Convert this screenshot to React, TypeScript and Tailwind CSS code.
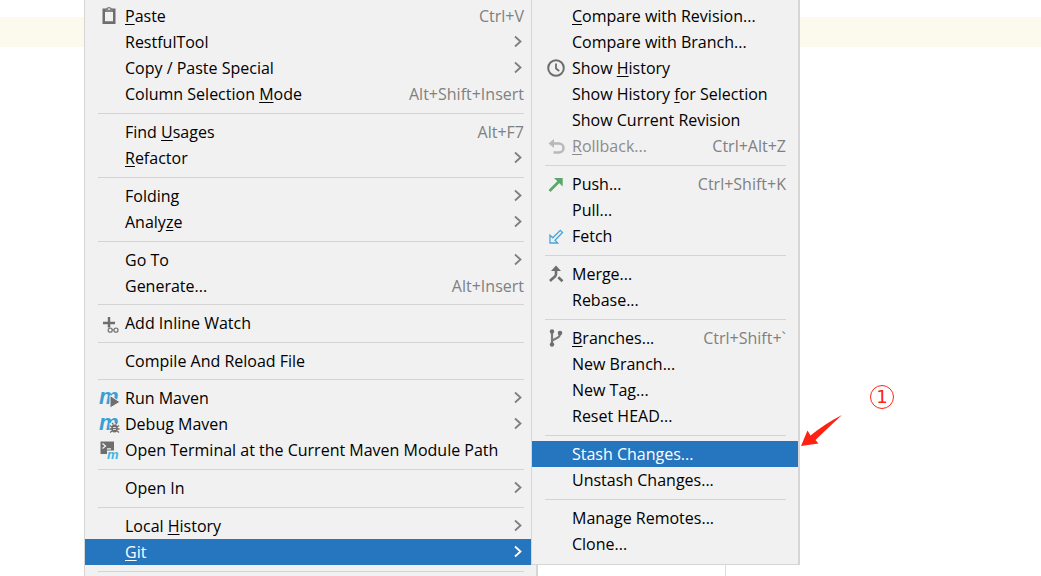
import type { ReactNode } from "react";

type Item = {
  label: string;
  mnemonic?: number;
  shortcut?: string;
  submenu?: boolean;
  icon?: ReactNode;
  disabled?: boolean;
  active?: boolean;
};

type Group = { items: Item[]; tight?: boolean };

function Icon({ children }: { children: ReactNode }) {
  return (
    <svg viewBox="0 0 20 20" className="size-5 overflow-visible" fill="none" aria-hidden="true">
      {children}
    </svg>
  );
}

const pasteIcon = (
  <Icon>
    <path d="M3.5 2.5h13v15.500h-13z M6 6v9.200h8V6z" fill="#6e6e6e" fillRule="evenodd" />
    <path d="M6.500 2.800C7.500 2.800 7.700 1 10 1s2.500 1.800 3.500 1.800V6h-7z" fill="#858585" />
    <path d="M9 2.500h2v1.200H9z" fill="#f1f1f1" />
  </Icon>
);

const watchIcon = (
  <Icon>
    <path d="M4 10h12M10 4v11" stroke="#6e6e6e" strokeWidth="2.400" />
    <path d="M8 14h12v6H8z" fill="#f1f1f1" />
    <path d="M10 13v1.500" stroke="#6e6e6e" strokeWidth="2.400" />
    <circle cx="11.200" cy="17.200" r="2" stroke="#7a7a7a" strokeWidth="1.300" />
    <circle cx="17" cy="17.200" r="2" stroke="#7a7a7a" strokeWidth="1.300" />
    <path d="M13 16.800h2" stroke="#7a7a7a" />
  </Icon>
);

const mavenText = "font-['Liberation_Sans',sans-serif] font-bold italic";

const runMavenIcon = (
  <Icon>
    <text x="0" y="15.500" className={mavenText} fontSize="22" fill="#389fd6">m</text>
    <path d="M11 7.500l10 6.500-10 6z" fill="#6e6e6e" stroke="#f1f1f1" />
  </Icon>
);

const debugMavenIcon = (
  <Icon>
    <text x="0" y="15.500" className={mavenText} fontSize="22" fill="#389fd6">m</text>
    <path d="M10.500 9H20v11h-9.500z" fill="#f1f1f1" />
    <ellipse cx="15.500" cy="14.500" rx="3.200" ry="4" fill="#6e6e6e" />
    <path d="M11 11.500l2 1.500M20 11.500L18 13M10.500 15h10M11 18.500l2-1.500M20 18.500L18 17M13 9l1.500 1.500M18 9l-1.500 1.500" stroke="#6e6e6e" strokeWidth="1.300" />
    <path d="M14 13.500h3M14 15.500h3" stroke="#f1f1f1" strokeWidth=".8" />
  </Icon>
);

const terminalIcon = (
  <Icon>
    <path d="M1.500 1.500H15v9H8V14H1.500z" fill="#6e6e6e" />
    <path d="M3.500 3.500l3 2.500-3 2.500M8 8.800h4" stroke="#f1f1f1" strokeWidth="1.300" />
    <text x="8" y="19" className={mavenText} fontSize="13" fill="#40b6e0">m</text>
  </Icon>
);

const historyIcon = (
  <Icon>
    <circle cx="10" cy="10" r="7.800" stroke="#6e6e6e" strokeWidth="2" />
    <path d="M10 5.500v5l3.200 2.500" stroke="#6e6e6e" strokeWidth="1.800" />
  </Icon>
);

const rollbackIcon = (
  <Icon>
    <path d="M2.500 7.500L8 3v9z" fill="#b8b8b8" />
    <path d="M7 7.500h6a4.500 4.500 0 0 1 0 9H7.500" stroke="#b8b8b8" strokeWidth="2.500" />
  </Icon>
);

const pushIcon = (
  <Icon>
    <path d="M8 4h8.700v8.500z" fill="#59a869" />
    <path d="M3.500 17L13.500 7" stroke="#59a869" strokeWidth="2.600" />
  </Icon>
);

const fetchIcon = (
  <Icon>
    <path d="M4 17V9.300l2.800 2.500 7.500-7.500 2.200 2.200L9 14.200l2.700 2.800z" stroke="#45a5db" strokeWidth="1.300" />
  </Icon>
);

const mergeIcon = (
  <Icon>
    <path d="M10 1.500l5 5.500H5z" fill="#6e6e6e" />
    <path d="M10 6v4.500c0 2-2.500 3-6 6.500M12.300 13.200l4.200 4" stroke="#6e6e6e" strokeWidth="2.600" />
  </Icon>
);

const branchIcon = (
  <Icon>
    <path d="M6 3v14M14 5c0 5-3 4.500-8 7.500" stroke="#7a7a7a" strokeWidth="2.200" />
    <circle cx="6" cy="3.500" r="2.200" fill="#6e6e6e" />
    <circle cx="6" cy="16.500" r="2.200" fill="#6e6e6e" />
    <circle cx="14" cy="5" r="2.300" fill="#6e6e6e" />
  </Icon>
);

const editorMenu: Group[] = [
  {
    items: [
      { label: "Paste", mnemonic: 0, shortcut: "Ctrl+V", icon: pasteIcon },
      { label: "RestfulTool", submenu: true },
      { label: "Copy / Paste Special", submenu: true },
      { label: "Column Selection Mode", mnemonic: 17, shortcut: "Alt+Shift+Insert" },
    ],
  },
  {
    items: [
      { label: "Find Usages", mnemonic: 5, shortcut: "Alt+F7" },
      { label: "Refactor", mnemonic: 0, submenu: true },
    ],
  },
  {
    items: [
      { label: "Folding", submenu: true },
      { label: "Analyze", mnemonic: 5, submenu: true },
    ],
  },
  {
    items: [
      { label: "Go To", submenu: true },
      { label: "Generate...", shortcut: "Alt+Insert" },
    ],
    tight: true,
  },
  { items: [{ label: "Add Inline Watch", icon: watchIcon }] },
  { items: [{ label: "Compile And Reload File" }], tight: true },
  {
    items: [
      { label: "Run Maven", submenu: true, icon: runMavenIcon },
      { label: "Debug Maven", submenu: true, icon: debugMavenIcon },
      { label: "Open Terminal at the Current Maven Module Path", icon: terminalIcon },
    ],
  },
  { items: [{ label: "Open In", submenu: true }] },
  {
    items: [
      { label: "Local History", mnemonic: 6, submenu: true },
      { label: "Git", mnemonic: 0, submenu: true, active: true },
    ],
  },
  { items: [] },
];

const gitMenu: Group[] = [
  {
    items: [
      { label: "Compare with Revision...", mnemonic: 0 },
      { label: "Compare with Branch..." },
      { label: "Show History", mnemonic: 5, icon: historyIcon },
      { label: "Show History for Selection", mnemonic: 13 },
      { label: "Show Current Revision" },
      { label: "Rollback...", mnemonic: 0, shortcut: "Ctrl+Alt+Z", icon: rollbackIcon, disabled: true },
    ],
  },
  {
    items: [
      { label: "Push...", shortcut: "Ctrl+Shift+K", icon: pushIcon },
      { label: "Pull..." },
      { label: "Fetch", icon: fetchIcon },
    ],
  },
  { items: [{ label: "Merge...", icon: mergeIcon }, { label: "Rebase..." }] },
  {
    items: [
      { label: "Branches...", mnemonic: 0, shortcut: "Ctrl+Shift+`", icon: branchIcon },
      { label: "New Branch..." },
      { label: "New Tag..." },
      { label: "Reset HEAD..." },
    ],
  },
  { items: [{ label: "Stash Changes...", active: true }, { label: "Unstash Changes..." }] },
  { items: [{ label: "Manage Remotes..." }, { label: "Clone..." }] },
];

function Label({ text, mnemonic }: { text: string; mnemonic?: number }) {
  if (mnemonic === undefined) return <span>{text}</span>;
  return (
    <span>
      {text.slice(0, mnemonic)}
      <u className="decoration-1 underline-offset-2">{text[mnemonic]}</u>
      {text.slice(mnemonic + 1)}
    </span>
  );
}

function MenuItem({ item }: { item: Item }) {
  const color = item.active
    ? "bg-[#2675bf] text-white"
    : item.disabled
      ? "text-[#8c8c8c]"
      : "text-black";
  return (
    <button
      type="button"
      role="menuitem"
      disabled={item.disabled}
      className={`flex h-[26px] w-full items-center gap-1.5 pr-3 pl-3.5 text-left whitespace-nowrap ${color}`}
    >
      <span className="size-5 shrink-0">{item.icon}</span>
      <Label text={item.label} mnemonic={item.mnemonic} />
      {item.shortcut && <span className="ml-auto text-[#808080]">{item.shortcut}</span>}
      {item.submenu && (
        <svg viewBox="0 0 12 14" className="ml-auto h-3.5 w-3" fill="none" aria-hidden="true">
          <path d="M3 1.500L8.500 6.500 3 11.500" stroke={item.active ? "#fff" : "#7f7f7f"} strokeWidth="1.800" />
        </svg>
      )}
    </button>
  );
}

function Menu({ groups, name, className }: { groups: Group[]; name: string; className: string }) {
  return (
    <div role="menu" aria-label={name} className={`shrink-0 border-l border-[#d6d6d6] bg-[#f1f1f1] pt-[3px] ${className}`}>
      {groups.map((group, i) => (
        <div key={i}>
          {group.items.map((item) => (
            <MenuItem key={item.label} item={item} />
          ))}
          {i < groups.length - 1 && (
            <hr className={`mr-3 mb-[5px] ml-[13px] border-[#d4d4d4] ${group.tight ? "mt-[5px]" : "mt-1.5"}`} />
          )}
        </div>
      ))}
    </div>
  );
}

export default function App() {
  return (
    <main className="relative h-screen overflow-hidden bg-white font-['Open_Sans',sans-serif] text-base">
      <div className="absolute inset-x-0 top-[17px] h-[30px] bg-[#fcfaed]" />
      <div className="absolute inset-y-0 left-[725px] w-px bg-[#dedede]" />

      <div className="relative flex h-full items-start pl-[84px]">
        <Menu groups={editorMenu} name="Editor" className="min-h-full w-[454px] border-r-2" />
        <Menu groups={gitMenu} name="Git" className="z-10 -ml-[7px] w-[269px] border-r-2 border-b pb-[7px]" />
      </div>

      <svg viewBox="0 0 42 32" className="absolute top-[415px] left-[801px] h-8 w-[42px]" aria-hidden="true">
        <path d="M0 31L6.500 15.500L9.500 20.500Q25 8 41 0Q29 11 14.500 25L17.500 28.500Z" fill="#ff2213" />
      </svg>
      <span className="absolute top-[385px] left-[870px] grid size-6 place-items-center rounded-full border border-[#ff2213] font-['DejaVu_Sans',sans-serif] text-lg leading-none text-[#ff2213]">
        1
      </span>
    </main>
  );
}
